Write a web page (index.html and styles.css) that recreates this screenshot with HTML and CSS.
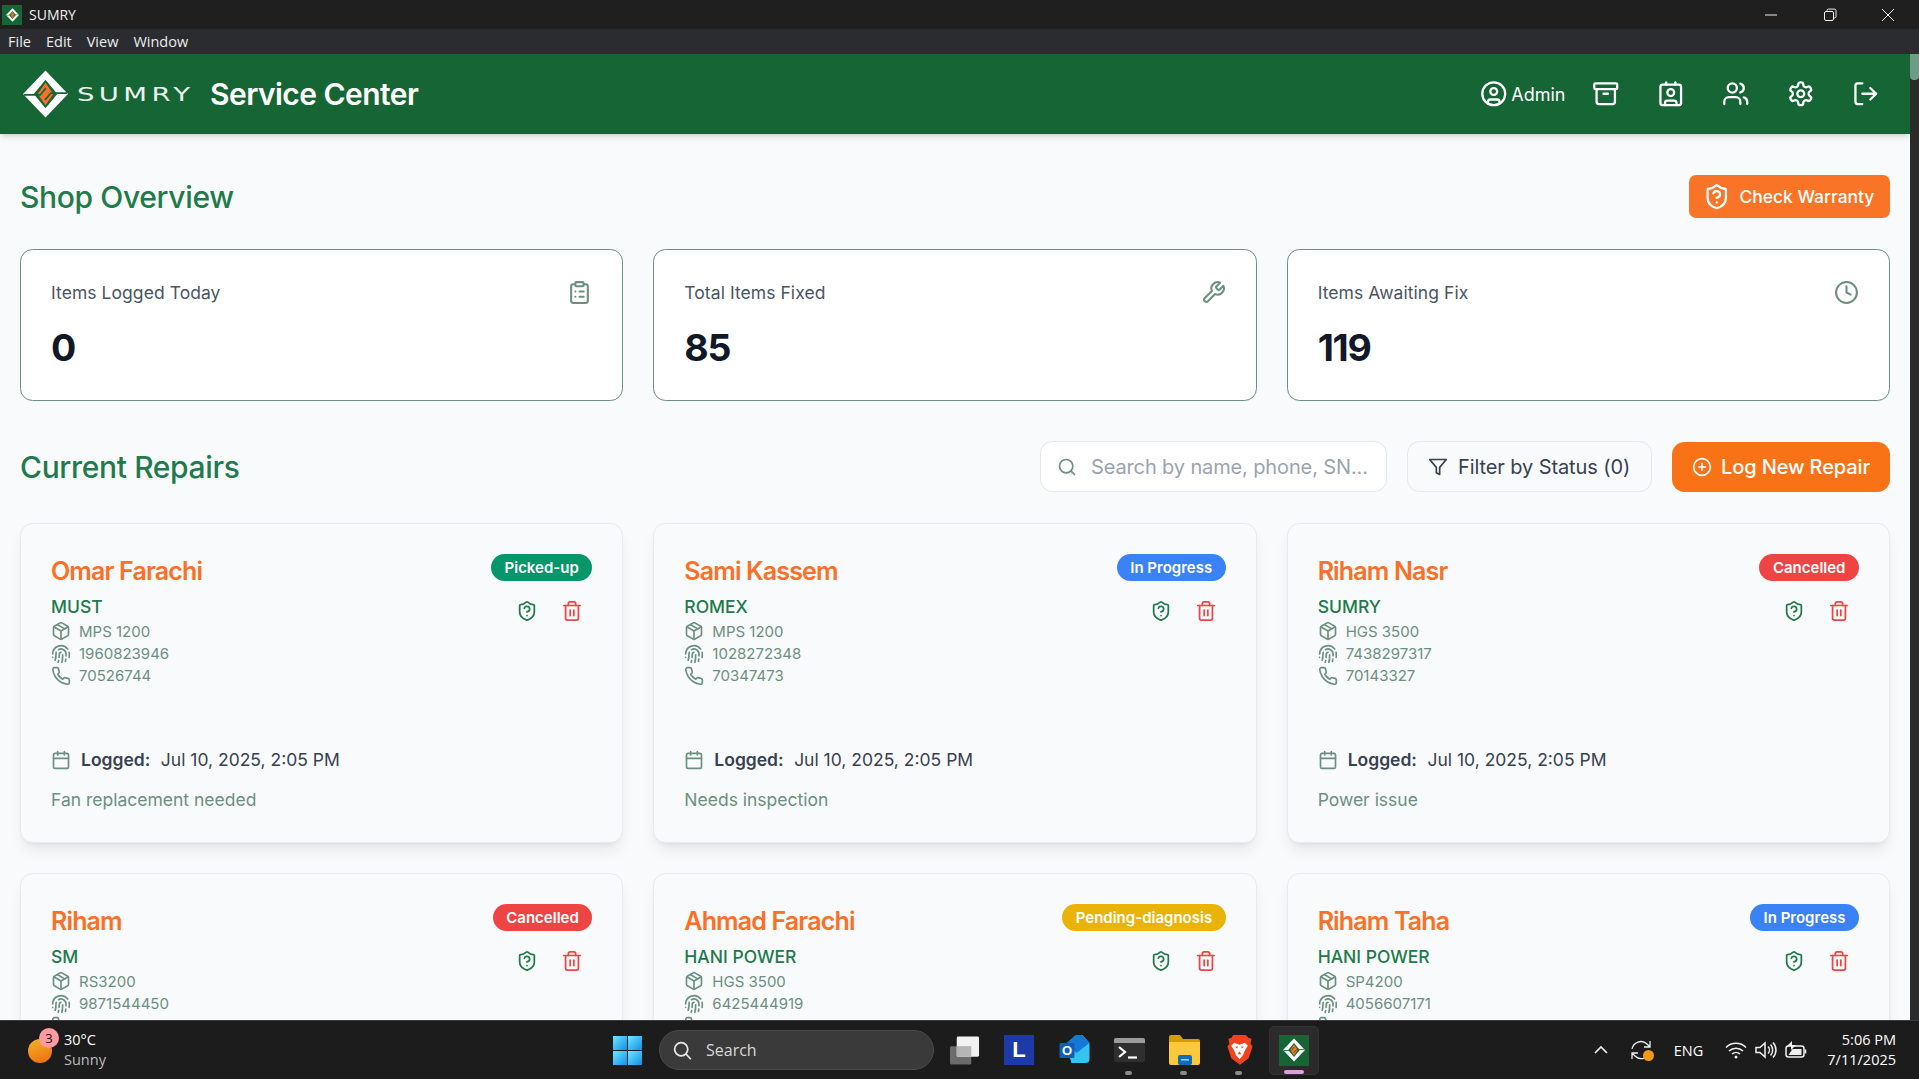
FILE: index.html
```html
<!DOCTYPE html>
<html lang="en">
<head>
<meta charset="utf-8">
<title>SUMRY Service Center</title>
<link rel="stylesheet" href="styles.css">
</head>
<body>
<svg class="sprite" xmlns="http://www.w3.org/2000/svg">
  <symbol id="i-shield" viewBox="0 0 24 24"><path d="M20 13c0 5-3.5 7.5-7.66 8.95a1 1 0 0 1-.67-.01C7.5 20.5 4 18 4 13V6a1 1 0 0 1 1-1c2 0 4.5-1.2 6.24-2.72a1.17 1.17 0 0 1 1.52 0C14.51 3.81 17 5 19 5a1 1 0 0 1 1 1z"/><path d="M9.1 9a3 3 0 0 1 5.82 1c0 2-3 3-3 3"/><path d="M12 17h.01"/></symbol>
  <symbol id="i-trash" viewBox="0 0 24 24"><path d="M3 6h18"/><path d="M19 6v14c0 1-1 2-2 2H7c-1 0-2-1-2-2V6"/><path d="M8 6V4c0-1 1-2 2-2h4c1 0 2 1 2 2v2"/><line x1="10" x2="10" y1="11" y2="17"/><line x1="14" x2="14" y1="11" y2="17"/></symbol>
  <symbol id="i-package" viewBox="0 0 24 24"><path d="M11 21.73a2 2 0 0 0 2 0l7-4A2 2 0 0 0 21 16V8a2 2 0 0 0-1-1.73l-7-4a2 2 0 0 0-2 0l-7 4A2 2 0 0 0 3 8v8a2 2 0 0 0 1 1.73z"/><path d="M12 22V12"/><path d="m3.3 7 8.7 5 8.7-5"/><path d="m7.5 4.27 9 5.15"/></symbol>
  <symbol id="i-finger" viewBox="0 0 24 24"><path d="M12 10a2 2 0 0 0-2 2c0 1.02-.1 2.51-.26 4"/><path d="M14 13.12c0 2.38 0 6.38-1 8.88"/><path d="M17.29 21.02c.12-.6.43-2.3.5-3.02"/><path d="M2 12a10 10 0 0 1 18-6"/><path d="M2 16h.01"/><path d="M21.8 16c.2-2 .131-5.354 0-6"/><path d="M5 19.5C5.5 18 6 15 6 12a6 6 0 0 1 .34-2"/><path d="M8.65 22c.21-.66.45-1.32.57-2"/><path d="M9 6.8a6 6 0 0 1 9 5.2v2"/></symbol>
  <symbol id="i-phone" viewBox="0 0 24 24"><path d="M22 16.92v3a2 2 0 0 1-2.18 2 19.79 19.79 0 0 1-8.63-3.07 19.5 19.5 0 0 1-6-6 19.79 19.79 0 0 1-3.07-8.67A2 2 0 0 1 4.11 2h3a2 2 0 0 1 2 1.72 12.84 12.84 0 0 0 .7 2.81 2 2 0 0 1-.45 2.11L8.09 9.91a16 16 0 0 0 6 6l1.27-1.27a2 2 0 0 1 2.11-.45 12.84 12.84 0 0 0 2.81.7A2 2 0 0 1 22 16.92z"/></symbol>
  <symbol id="i-calendar" viewBox="0 0 24 24"><path d="M8 2v4"/><path d="M16 2v4"/><rect width="18" height="18" x="3" y="4" rx="2"/><path d="M3 10h18"/></symbol>
  <symbol id="i-clipboard" viewBox="0 0 24 24"><rect width="8" height="4" x="8" y="2" rx="1" ry="1"/><path d="M16 4h2a2 2 0 0 1 2 2v14a2 2 0 0 1-2 2H6a2 2 0 0 1-2-2V6a2 2 0 0 1 2-2h2"/><path d="M12 11h4"/><path d="M12 16h4"/><path d="M8 11h.01"/><path d="M8 16h.01"/></symbol>
  <symbol id="i-wrench" viewBox="0 0 24 24"><path d="M14.7 6.3a1 1 0 0 0 0 1.4l1.6 1.6a1 1 0 0 0 1.4 0l3.77-3.77a6 6 0 0 1-7.94 7.94l-6.91 6.91a2.12 2.12 0 0 1-3-3l6.91-6.91a6 6 0 0 1 7.94-7.94l-3.76 3.76z"/></symbol>
  <symbol id="i-clock" viewBox="0 0 24 24"><circle cx="12" cy="12" r="10"/><polyline points="12 6 12 12 16 14"/></symbol>
  <symbol id="i-search" viewBox="0 0 24 24"><circle cx="11" cy="11" r="8"/><path d="m21 21-4.3-4.3"/></symbol>
  <symbol id="i-filter" viewBox="0 0 24 24"><polygon points="22 3 2 3 10 12.46 10 19 14 21 14 12.46 22 3"/></symbol>
  <symbol id="i-plus" viewBox="0 0 24 24"><circle cx="12" cy="12" r="10"/><path d="M8 12h8"/><path d="M12 8v8"/></symbol>
  <symbol id="i-user" viewBox="0 0 24 24"><circle cx="12" cy="12" r="10"/><circle cx="12" cy="10" r="3"/><path d="M7 20.662V19a2 2 0 0 1 2-2h6a2 2 0 0 1 2 2v1.662"/></symbol>
  <symbol id="i-archive" viewBox="0 0 24 24"><rect width="20" height="5" x="2" y="3" rx="1"/><path d="M4 8v11a2 2 0 0 0 2 2h12a2 2 0 0 0 2-2V8"/><path d="M10 12h4"/></symbol>
  <symbol id="i-contact" viewBox="0 0 24 24"><path d="M16 2v2"/><path d="M7 22v-2a2 2 0 0 1 2-2h6a2 2 0 0 1 2 2v2"/><path d="M8 2v2"/><circle cx="12" cy="11" r="3"/><rect x="3" y="4" width="18" height="18" rx="2"/></symbol>
  <symbol id="i-users" viewBox="0 0 24 24"><path d="M16 21v-2a4 4 0 0 0-4-4H6a4 4 0 0 0-4 4v2"/><circle cx="9" cy="7" r="4"/><path d="M22 21v-2a4 4 0 0 0-3-3.87"/><path d="M16 3.13a4 4 0 0 1 0 7.75"/></symbol>
  <symbol id="i-settings" viewBox="0 0 24 24"><path d="M12.22 2h-.44a2 2 0 0 0-2 2v.18a2 2 0 0 1-1 1.73l-.43.25a2 2 0 0 1-2 0l-.15-.08a2 2 0 0 0-2.73.73l-.22.38a2 2 0 0 0 .73 2.73l.15.1a2 2 0 0 1 1 1.72v.51a2 2 0 0 1-1 1.74l-.15.09a2 2 0 0 0-.73 2.73l.22.38a2 2 0 0 0 2.73.73l.15-.08a2 2 0 0 1 2 0l.43.25a2 2 0 0 1 1 1.73V20a2 2 0 0 0 2 2h.44a2 2 0 0 0 2-2v-.18a2 2 0 0 1 1-1.73l.43-.25a2 2 0 0 1 2 0l.15.08a2 2 0 0 0 2.73-.73l.22-.39a2 2 0 0 0-.73-2.73l-.15-.08a2 2 0 0 1-1-1.74v-.5a2 2 0 0 1 1-1.74l.15-.09a2 2 0 0 0 .73-2.73l-.22-.38a2 2 0 0 0-2.73-.73l-.15.08a2 2 0 0 1-2 0l-.43-.25a2 2 0 0 1-1-1.73V4a2 2 0 0 0-2-2z"/><circle cx="12" cy="12" r="3"/></symbol>
  <symbol id="i-logout" viewBox="0 0 24 24"><path d="M9 21H5a2 2 0 0 1-2-2V5a2 2 0 0 1 2-2h4"/><polyline points="16 17 21 12 16 7"/><line x1="21" x2="9" y1="12" y2="12"/></symbol>
  <symbol id="logo-mark" viewBox="0 0 46 48">
    <polygon points="23,0 46,24 23,48 0,24" fill="#fff"/>
    <polygon points="23,9.500 35,24 23,38.500 11,24" fill="#166534"/>
    <polygon points="23,12.500 31,24 23,35.500 15,24" fill="#f97026"/>
    <path d="M1 25H17.500L23.500 18" fill="none" stroke="#166534" stroke-width="1.800"/>
    <path d="M45 23H28.500L22.500 30" fill="none" stroke="#166534" stroke-width="1.800"/>
  </symbol>
</svg>

<div class="titlebar">
  <div class="title-left">
    <span class="app-tile app-tile-small"><svg class="tile-logo"><use href="#logo-mark"/></svg></span>
    <span class="title-text">SUMRY</span>
  </div>
  <div class="win-controls">
    <svg class="win-btn" viewBox="0 0 14 14"><path d="M1 7h12"/></svg>
    <svg class="win-btn" viewBox="0 0 14 14"><rect x="1.500" y="3.500" width="9" height="9" rx="1.500"/><path d="M4 3.200V2.600A1.500 1.500 0 0 1 5.500 1.100h6a1.500 1.500 0 0 1 1.500 1.500v6A1.500 1.500 0 0 1 11.500 10H11"/></svg>
    <svg class="win-btn" viewBox="0 0 14 14"><path d="M1 1l12 12M13 1L1 13"/></svg>
  </div>
</div>
<nav class="menubar"><span>File</span><span>Edit</span><span>View</span><span>Window</span></nav>

<div class="app">
  <div class="viewport">
    <header class="header">
      <div class="brand">
        <svg class="logo"><use href="#logo-mark"/></svg>
        <span class="wordmark"><span class="wordmark-text">SUMRY</span></span>
        <h1 class="app-name">Service Center</h1>
      </div>
      <div class="header-nav">
        <div class="admin"><svg class="ico ico-nav"><use href="#i-user"/></svg><span>Admin</span></div>
        <svg class="ico ico-nav"><use href="#i-archive"/></svg>
        <svg class="ico ico-nav"><use href="#i-contact"/></svg>
        <svg class="ico ico-nav"><use href="#i-users"/></svg>
        <svg class="ico ico-nav"><use href="#i-settings"/></svg>
        <svg class="ico ico-nav"><use href="#i-logout"/></svg>
      </div>
    </header>
    <main class="main">
      <section class="overview-head">
        <h2 class="section-title">Shop Overview</h2>
        <button class="btn-warranty"><svg class="ico ico-btn"><use href="#i-shield"/></svg>Check Warranty</button>
      </section>
      <section class="stats">
        <div class="stat">
          <div class="stat-top"><span class="stat-label">Items Logged Today</span><svg class="ico ico-stat"><use href="#i-clipboard"/></svg></div>
          <div class="stat-value">0</div>
        </div>
        <div class="stat">
          <div class="stat-top"><span class="stat-label">Total Items Fixed</span><svg class="ico ico-stat"><use href="#i-wrench"/></svg></div>
          <div class="stat-value">85</div>
        </div>
        <div class="stat">
          <div class="stat-top"><span class="stat-label">Items Awaiting Fix</span><svg class="ico ico-stat"><use href="#i-clock"/></svg></div>
          <div class="stat-value">119</div>
        </div>
      </section>
      <section class="repairs-head">
        <h2 class="section-title">Current Repairs</h2>
        <div class="repairs-tools">
          <label class="search"><svg class="ico ico-search"><use href="#i-search"/></svg><input class="search-input" type="text" placeholder="Search by name, phone, SN..."></label>
          <button class="btn-filter"><svg class="ico ico-tool"><use href="#i-filter"/></svg>Filter by Status (0)</button>
          <button class="btn-log"><svg class="ico ico-tool"><use href="#i-plus"/></svg>Log New Repair</button>
        </div>
      </section>
      <section class="cards">
        <article class="card">
          <div class="card-top">
            <div class="card-info">
              <h3 class="cust">Omar Farachi</h3>
              <div class="make">MUST</div>
              <ul class="details">
                <li><svg class="ico ico-detail"><use href="#i-package"/></svg>MPS 1200</li>
                <li><svg class="ico ico-detail"><use href="#i-finger"/></svg>1960823946</li>
                <li><svg class="ico ico-detail"><use href="#i-phone"/></svg>70526744</li>
              </ul>
            </div>
            <div class="card-side">
              <span class="badge badge-green">Picked-up</span>
              <div class="actions"><button class="act act-shield"><svg class="ico ico-act"><use href="#i-shield"/></svg></button><button class="act act-trash"><svg class="ico ico-act"><use href="#i-trash"/></svg></button></div>
            </div>
          </div>
          <div class="card-foot">
            <div class="logged"><svg class="ico ico-detail"><use href="#i-calendar"/></svg><b>Logged:</b><span>Jul 10, 2025, 2:05 PM</span></div>
            <p class="note">Fan replacement needed</p>
          </div>
        </article>
        <article class="card">
          <div class="card-top">
            <div class="card-info">
              <h3 class="cust">Sami Kassem</h3>
              <div class="make">ROMEX</div>
              <ul class="details">
                <li><svg class="ico ico-detail"><use href="#i-package"/></svg>MPS 1200</li>
                <li><svg class="ico ico-detail"><use href="#i-finger"/></svg>1028272348</li>
                <li><svg class="ico ico-detail"><use href="#i-phone"/></svg>70347473</li>
              </ul>
            </div>
            <div class="card-side">
              <span class="badge badge-blue">In Progress</span>
              <div class="actions"><button class="act act-shield"><svg class="ico ico-act"><use href="#i-shield"/></svg></button><button class="act act-trash"><svg class="ico ico-act"><use href="#i-trash"/></svg></button></div>
            </div>
          </div>
          <div class="card-foot">
            <div class="logged"><svg class="ico ico-detail"><use href="#i-calendar"/></svg><b>Logged:</b><span>Jul 10, 2025, 2:05 PM</span></div>
            <p class="note">Needs inspection</p>
          </div>
        </article>
        <article class="card">
          <div class="card-top">
            <div class="card-info">
              <h3 class="cust">Riham Nasr</h3>
              <div class="make">SUMRY</div>
              <ul class="details">
                <li><svg class="ico ico-detail"><use href="#i-package"/></svg>HGS 3500</li>
                <li><svg class="ico ico-detail"><use href="#i-finger"/></svg>7438297317</li>
                <li><svg class="ico ico-detail"><use href="#i-phone"/></svg>70143327</li>
              </ul>
            </div>
            <div class="card-side">
              <span class="badge badge-red">Cancelled</span>
              <div class="actions"><button class="act act-shield"><svg class="ico ico-act"><use href="#i-shield"/></svg></button><button class="act act-trash"><svg class="ico ico-act"><use href="#i-trash"/></svg></button></div>
            </div>
          </div>
          <div class="card-foot">
            <div class="logged"><svg class="ico ico-detail"><use href="#i-calendar"/></svg><b>Logged:</b><span>Jul 10, 2025, 2:05 PM</span></div>
            <p class="note">Power issue</p>
          </div>
        </article>
        <article class="card">
          <div class="card-top">
            <div class="card-info">
              <h3 class="cust">Riham</h3>
              <div class="make">SM</div>
              <ul class="details">
                <li><svg class="ico ico-detail"><use href="#i-package"/></svg>RS3200</li>
                <li><svg class="ico ico-detail"><use href="#i-finger"/></svg>9871544450</li>
                <li><svg class="ico ico-detail"><use href="#i-phone"/></svg></li>
              </ul>
            </div>
            <div class="card-side">
              <span class="badge badge-red">Cancelled</span>
              <div class="actions"><button class="act act-shield"><svg class="ico ico-act"><use href="#i-shield"/></svg></button><button class="act act-trash"><svg class="ico ico-act"><use href="#i-trash"/></svg></button></div>
            </div>
          </div>
        </article>
        <article class="card">
          <div class="card-top">
            <div class="card-info">
              <h3 class="cust">Ahmad Farachi</h3>
              <div class="make">HANI POWER</div>
              <ul class="details">
                <li><svg class="ico ico-detail"><use href="#i-package"/></svg>HGS 3500</li>
                <li><svg class="ico ico-detail"><use href="#i-finger"/></svg>6425444919</li>
                <li><svg class="ico ico-detail"><use href="#i-phone"/></svg></li>
              </ul>
            </div>
            <div class="card-side">
              <span class="badge badge-yellow">Pending-diagnosis</span>
              <div class="actions"><button class="act act-shield"><svg class="ico ico-act"><use href="#i-shield"/></svg></button><button class="act act-trash"><svg class="ico ico-act"><use href="#i-trash"/></svg></button></div>
            </div>
          </div>
        </article>
        <article class="card">
          <div class="card-top">
            <div class="card-info">
              <h3 class="cust">Riham Taha</h3>
              <div class="make">HANI POWER</div>
              <ul class="details">
                <li><svg class="ico ico-detail"><use href="#i-package"/></svg>SP4200</li>
                <li><svg class="ico ico-detail"><use href="#i-finger"/></svg>4056607171</li>
                <li><svg class="ico ico-detail"><use href="#i-phone"/></svg></li>
              </ul>
            </div>
            <div class="card-side">
              <span class="badge badge-blue">In Progress</span>
              <div class="actions"><button class="act act-shield"><svg class="ico ico-act"><use href="#i-shield"/></svg></button><button class="act act-trash"><svg class="ico ico-act"><use href="#i-trash"/></svg></button></div>
            </div>
          </div>
        </article>
      </section>
    </main>
  </div>
  <div class="scrollbar"><div class="scroll-thumb"></div></div>
</div>

<footer class="taskbar">
  <div class="weather">
    <span class="sun"><span class="sun-badge">3</span></span>
    <div class="weather-text"><span>30°C</span><span class="weather-sub">Sunny</span></div>
  </div>
  <div class="tb-center">
    <svg class="win-logo" viewBox="0 0 29 29">
      <defs><linearGradient id="wg" x1="0" y1="0" x2="1" y2="1"><stop offset="0" stop-color="#6fe8ff"/><stop offset="1" stop-color="#0f8fe8"/></linearGradient></defs>
      <rect width="14" height="14" fill="url(#wg)"/><rect x="15" width="14" height="14" fill="url(#wg)"/><rect y="15" width="14" height="14" fill="url(#wg)"/><rect x="15" y="15" width="14" height="14" fill="url(#wg)"/>
    </svg>
    <div class="tb-search">
      <svg class="tb-search-ico" viewBox="0 0 24 24"><circle cx="10.500" cy="10.500" r="7.500"/><path d="m16 16 5.500 6"/></svg>
      <span>Search</span>
    </div>
    <div class="tb-apps">
      <div class="tb-app">
        <svg class="tb-ico" viewBox="0 0 32 30"><rect x="1" y="11" width="22" height="19" rx="1.500" fill="#6c6c6c"/><rect x="8" y="1" width="23" height="21" rx="1.500" fill="#f2f2f2"/><rect x="8" y="11" width="15" height="11" fill="#b5b5b5"/></svg>
      </div>
      <div class="tb-app"><span class="tile-l">L</span></div>
      <div class="tb-app">
        <svg class="tb-ico" viewBox="0 0 30 30"><path d="M14 2 23 0l7 8v16a4 4 0 0 1-4 4H12l-2-6z" fill="#36c3f2"/><path d="M7 8l9-8h7l7 8-13 10z" fill="#1478d4"/><rect x="0" y="8" width="15" height="15" rx="1.500" fill="#0f5fb8"/><text class="outlook-o" x="7.500" y="20">O</text></svg>
      </div>
      <div class="tb-app tb-app-dot">
        <svg class="tb-ico" viewBox="0 0 31 24"><rect width="31" height="24" rx="2" fill="#2f2f2f"/><path d="M0 2a2 2 0 0 1 2-2h27a2 2 0 0 1 2 2v3H0z" fill="#9c9c9c"/><path d="M5 9l6 5-6 5" fill="none" stroke="#fff" stroke-width="2.200"/><path d="M14 19.500h9" stroke="#fff" stroke-width="2.200"/></svg>
      </div>
      <div class="tb-app tb-app-dot">
        <svg class="tb-ico" viewBox="0 0 31 30"><path d="M0 2a2 2 0 0 1 2-2h9l3 4h15a2 2 0 0 1 2 2v4H0z" fill="#d99a06"/><path d="M0 7h31v21a2 2 0 0 1-2 2H2a2 2 0 0 1-2-2z" fill="#fcc93c"/><rect x="9" y="20" width="14" height="10" rx="2" fill="#0f6cbd"/><rect x="12" y="24" width="8" height="1.600" fill="#8fd0ff"/></svg>
      </div>
      <div class="tb-app tb-app-dot">
        <svg class="tb-ico" viewBox="0 0 27 31"><path d="M7 0h13l3 3 3 1-1 5 2 3-4 12-8 6-1 1-1-1-8-6-4-12 2-3-1-5 3-1z" fill="#f0421c"/><path d="M8 8l5.500 2L19 8l3 3-3 5-2 5-3.500 4L10 21l-2-5-3-5z" fill="#fff"/><path d="M9 12h3l-1 2zM18 12h-3l1 2zM13.500 17l-2 3h4z" fill="#f0421c"/></svg>
      </div>
      <div class="tb-app tb-app-active">
        <span class="app-tile app-tile-big"><svg class="tile-logo tile-logo-big"><use href="#logo-mark"/></svg></span>
      </div>
    </div>
  </div>
  <div class="tray">
    <svg class="tray-chev" viewBox="0 0 16 10"><path d="M2 8l6-6 6 6"/></svg>
    <span class="tray-sync">
      <svg class="tray-sync-ico" viewBox="0 0 22 22"><path d="M2 10a9 9 0 0 1 15-5l3 3M20 2v6h-6M20 13a9 9 0 0 1-15 4l-3-3M2 20v-6h6"/></svg>
      <span class="sync-dot"></span>
    </span>
    <span class="tray-lang">ENG</span>
    <div class="tray-icons">
      <svg class="tray-ico" viewBox="0 0 22 18"><path d="M1 6.500a14 14 0 0 1 20 0M4 10a10 10 0 0 1 14 0M7 13a6 6 0 0 1 8 0"/><circle class="tray-fill" cx="11" cy="16" r="1.500"/></svg>
      <svg class="tray-ico" viewBox="0 0 22 18"><path d="M1 6.500h4L10 2v14l-5-4.500H1zM13 5.500a5 5 0 0 1 0 7M15.500 3.500a8 8 0 0 1 0 11M18 1.500a11 11 0 0 1 0 15"/></svg>
      <svg class="tray-ico" viewBox="0 0 22 18"><rect x="1" y="5" width="18" height="11" rx="2.500"/><path d="M3.500 14l4-6h9v6z" class="tray-fill"/><path d="M20.500 8.500v4"/><path class="tray-fill" d="M7 0v4h4l-5 5V5H2z"/></svg>
    </div>
    <div class="tray-clock"><span>5:06 PM</span><span>7/11/2025</span></div>
  </div>
</footer>
</body>
</html>
```
FILE: styles.css
```css
* { box-sizing: border-box; }
html, body { margin: 0; height: 100%; }
body {
  display: flex;
  flex-direction: column;
  height: 100vh;
  overflow: hidden;
  font-family: Inter, "Liberation Sans", sans-serif;
  background: #f9fafb;
  color: #111827;
}
.sprite { width: 0; height: 0; position: absolute; }
h1, h2, h3, p, ul { margin: 0; padding: 0; }
ul { list-style: none; }
button { font-family: inherit; cursor: pointer; }

.ico { fill: none; stroke: currentColor; stroke-width: 2; stroke-linecap: round; stroke-linejoin: round; flex: none; display: block; }

/* window chrome */
.titlebar {
  height: 29px;
  flex: none;
  background: #1f1f1f;
  color: #f0f0f0;
  display: flex;
  align-items: center;
  justify-content: space-between;
  padding: 0 0 0 2px;
  font-family: "Open Sans", "Noto Sans", sans-serif;
  font-size: 14px;
}
.title-left { display: flex; align-items: center; gap: 7px; }
.title-text { line-height: 20px; }
.app-tile { background: #166534; display: flex; align-items: center; justify-content: center; flex: none; }
.app-tile-small { width: 20px; height: 20px; }
.app-tile-big { width: 30px; height: 31px; }
.tile-logo { width: 13px; height: 14px; display: block; }
.tile-logo-big { width: 22px; height: 24px; }
.win-controls { display: flex; align-items: center; gap: 44.500px; padding-right: 24px; }
.win-btn { width: 14px; height: 14px; fill: none; stroke: #f0f0f0; stroke-width: 1; display: block; }
.menubar {
  height: 25px;
  flex: none;
  background: #2b2c30;
  color: #ececec;
  display: flex;
  align-items: center;
  gap: 15px;
  padding-left: 8px;
  font-family: "Open Sans", "Noto Sans", sans-serif;
  font-size: 14.500px;
}

.app { flex: 1; min-height: 0; display: flex; }
.viewport { flex: 1; min-width: 0; display: flex; flex-direction: column; overflow: hidden; }
.scrollbar { width: 9px; flex: none; background: #2a2a2a; }
.scroll-thumb { height: 26px; background: #6f9c85; border-radius: 0 0 4px 4px; }

/* app header */
.header {
  height: 80px;
  flex: none;
  background: #166534;
  color: #fff;
  display: flex;
  align-items: center;
  justify-content: space-between;
  padding: 0 31px 0 23px;
  box-shadow: 0 4px 6px -1px rgba(0,0,0,.12), 0 2px 4px -2px rgba(0,0,0,.1);
  position: relative;
  z-index: 2;
}
.brand { display: flex; align-items: center; }
.logo { width: 45px; height: 48px; display: block; }
.wordmark { margin-left: 9px; width: 133px; }
.wordmark-text {
  display: inline-block;
  transform: scaleX(1.45);
  transform-origin: left center;
  font-family: "DejaVu Sans", "Liberation Sans", sans-serif;
  font-size: 19px;
  line-height: 20px;
  letter-spacing: 3px;
  color: #e9f2ec;
}
.app-name { font-size: 30px; font-weight: 600; line-height: 40px; letter-spacing: -.55px; }
.header-nav { display: flex; align-items: center; gap: 37.500px; }
.admin { display: flex; align-items: center; gap: 3.500px; font-size: 18px; font-weight: 400; margin-right: -11.500px; }
.ico-nav { width: 27.500px; height: 27.500px; }

/* main */
.main { flex: 1; min-height: 0; overflow: hidden; padding: 41px 20px 0; }
.section-title { font-size: 30px; font-weight: 500; line-height: 40px; color: #217a4b; letter-spacing: -.35px; }
.overview-head { display: flex; align-items: center; justify-content: space-between; height: 43px; }
.btn-warranty {
  height: 43px;
  width: 201px;
  border: 0;
  border-radius: 7px;
  background: #f97426;
  color: #fff;
  font-size: 17.500px;
  font-weight: 500;
  letter-spacing: -.03px;
  display: flex;
  align-items: center;
  gap: 9.500px;
  padding: 0 0 0 13.500px;
}
.ico-btn { width: 27.500px; height: 27.500px; }

.stats { display: grid; grid-template-columns: repeat(3, 1fr); gap: 30px; margin-top: 31px; }
.stat { background: #fff; border: 1px solid #6b9080; border-radius: 12.500px; padding: 30px; }
.stat-top { display: flex; justify-content: space-between; align-items: center; height: 25px; }
.stat-label { font-size: 17.500px; line-height: 25px; color: #4b5563; font-weight: 400; letter-spacing: .06px; }
.ico-stat { width: 25px; height: 25px; color: #6b9080; margin-top: -1px; }
.stat-value { font-size: 37.500px; line-height: 45px; font-weight: 700; margin-top: 20px; color: #111827; letter-spacing: -1.200px; }

.repairs-head { display: flex; align-items: center; justify-content: space-between; margin-top: 40px; height: 51px; }
.repairs-tools { display: flex; align-items: center; gap: 20px; }
.search {
  width: 347px;
  height: 51px;
  background: #fff;
  border: 1px solid #e5e7eb;
  border-radius: 12.500px;
  display: flex;
  align-items: center;
  padding-left: 16px;
  gap: 14px;
}
.ico-search { width: 20px; height: 20px; color: #6b9080; }
.search-input { border: 0; outline: 0; background: none; flex: 1; min-width: 0; padding: 0; font: 400 20px Inter, sans-serif; letter-spacing: -.13px; color: #374151; }
.search-input::placeholder { color: #9ca3af; opacity: 1; }
.btn-filter {
  width: 245px;
  height: 51px;
  background: #f9fafb;
  border: 1px solid #e5e7eb;
  border-radius: 12.500px;
  color: #374151;
  font-size: 20px;
  letter-spacing: -.1px;
  display: flex;
  align-items: center;
  gap: 10px;
  padding: 0 0 0 20px;
}
.btn-log {
  width: 218px;
  height: 50px;
  background: #f97316;
  border: 0;
  border-radius: 12.500px;
  color: #fff;
  font-size: 20px;
  font-weight: 500;
  letter-spacing: -.12px;
  display: flex;
  align-items: center;
  gap: 9px;
  padding: 0 0 0 20px;
}
.ico-tool { width: 20px; height: 20px; }

.cards { display: grid; grid-template-columns: repeat(3, 1fr); grid-auto-rows: 320px; gap: 30px; margin-top: 31px; }
.card {
  background: #f9fafb;
  border: 1px solid #e8eaee;
  border-radius: 12.500px;
  padding: 30px 30px 29px;
  box-shadow: 0 10px 15px -3px rgba(0,0,0,.08), 0 4px 6px -4px rgba(0,0,0,.08);
  display: flex;
  flex-direction: column;
}
.card-top { display: flex; justify-content: space-between; align-items: flex-start; }
.cust { font-size: 25px; line-height: 35px; font-weight: 600; color: #f97026; letter-spacing: -.85px; }
.make { font-size: 17.500px; line-height: 25px; font-weight: 500; color: #217a4b; margin-top: 5px; }
.details { margin-top: 1.200px; }
.details li { display: flex; align-items: center; gap: 8px; height: 22.300px; font-size: 15px; color: #6b9080; }
.ico-detail { width: 20px; height: 20px; color: #6b9080; }
.card-side { display: flex; flex-direction: column; align-items: flex-end; }
.badge { height: 27px; border-radius: 14px; padding: 0 13.500px; font-size: 15px; font-weight: 600; line-height: 27px; color: #fff; white-space: nowrap; }
.badge-green { background: #059669; }
.badge-blue { background: #3b82f6; }
.badge-red { background: #ef4444; }
.badge-yellow { background: #eab308; }
.actions { display: flex; gap: 7px; margin: 11px 1px 0 0; }
.act { width: 38px; height: 38px; background: none; border: 0; padding: 8px; }
.act-shield { color: #217a4b; }
.act-trash { color: #ef4444; }
.ico-act { width: 22px; height: 22px; stroke-width: 1.900; }
.card-foot { margin-top: auto; }
.logged { display: flex; align-items: center; height: 25px; font-size: 17.500px; color: #374151; }
.logged b { font-weight: 600; margin-left: 10px; }
.logged span { margin-left: 10.500px; }
.note { font-size: 17.500px; line-height: 26px; color: #6b9080; margin-top: 15px; }

/* taskbar */
.taskbar {
  height: 59px;
  flex: none;
  background: #1c1c1c;
  border-top: 1px solid #3a3a3a;
  color: #fff;
  display: grid;
  grid-template-columns: 613px 1fr auto;
  align-items: center;
  font-family: "Open Sans", "Noto Sans", sans-serif;
  font-size: 14.500px;
  position: relative;
  z-index: 3;
}
.weather { display: flex; align-items: center; padding-left: 28px; gap: 13px; }
.sun { display: block; width: 24px; height: 24px; border-radius: 50%; background: linear-gradient(160deg, #f1b528, #ee6a10); position: relative; margin-top: 1px; }
.sun-badge { position: absolute; top: -11px; left: 11px; width: 20px; height: 20px; border-radius: 50%; background: #ff9aa2; color: #111; font-size: 13px; line-height: 20px; text-align: center; }
.weather-text { display: flex; flex-direction: column; line-height: 20px; margin-left: -1px; }
.weather-sub { color: #bdbdbd; }
.tb-center { display: flex; align-items: center; }
.win-logo { width: 29px; height: 29px; display: block; flex: none; }
.tb-search {
  width: 275px;
  height: 40px;
  margin-left: 17px;
  background: #3a3a3a;
  border: 1px solid #4a4a4a;
  border-radius: 20px;
  display: flex;
  align-items: center;
  padding-left: 12px;
  gap: 13px;
  color: #d8d8d8;
  font-size: 16px;
}
.tb-search-ico { width: 21px; height: 21px; fill: none; stroke: #e8e8e8; stroke-width: 2; flex: none; }
.tb-apps { display: flex; align-items: center; gap: 5px; margin-left: 5px; }
.tb-app { width: 50px; height: 49px; display: flex; align-items: center; justify-content: center; position: relative; border-radius: 5px; }
.tb-ico { width: 31px; height: 30px; display: block; }
.tile-l { width: 30px; height: 30px; background: #1e3aa8; color: #fff; font: 700 22px/30px "Liberation Sans", sans-serif; text-align: center; }
.outlook-o { font: 700 13px "Liberation Sans", sans-serif; fill: #fff; text-anchor: middle; }
.tb-app-dot::after { content: ""; position: absolute; left: 21px; bottom: 0; width: 7px; height: 4px; border-radius: 2px; background: #8c8c8c; }
.tb-app-active { background: #2b2b2b; border: 1px solid #333; }
.tb-app-active::after { content: ""; position: absolute; left: 14px; bottom: 0; width: 20px; height: 4px; border-radius: 2px; background: #d9a0e0; }
.tray { display: flex; align-items: center; padding-right: 23px; }
.tray-chev { width: 16px; height: 10px; fill: none; stroke: #f0f0f0; stroke-width: 1.600; display: block; }
.tray-sync { position: relative; display: block; width: 22px; height: 22px; margin-left: 21px; }
.tray-sync-ico { width: 22px; height: 22px; fill: none; stroke: #f0f0f0; stroke-width: 1.300; display: block; }
.sync-dot { position: absolute; right: -2px; bottom: 0; width: 11px; height: 11px; border-radius: 50%; background: #f59a0c; }
.tray-lang { margin-left: 22px; }
.tray-icons { display: flex; align-items: center; gap: 8px; margin-left: 22px; }
.tray-ico { width: 22px; height: 18px; fill: none; stroke: #f0f0f0; stroke-width: 1.500; display: block; }
.tray-fill { fill: #f0f0f0; stroke: none; }
.tray-clock { display: flex; flex-direction: column; align-items: flex-end; line-height: 20px; margin-left: 20px; }
```
